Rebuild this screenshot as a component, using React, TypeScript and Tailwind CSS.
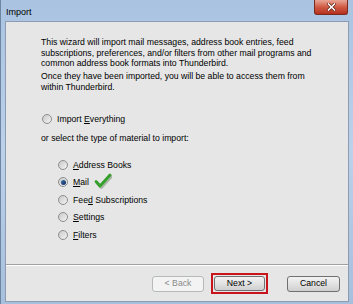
import React from "react";

const font = { fontFamily: '"Liberation Sans", Arial, sans-serif' };

const Radio = ({ checked = false }: { checked?: boolean }): React.ReactElement => {
  return (
    <div className="w-[10px] h-[10px] rounded-full border border-[#8e8e8e] bg-gradient-to-br from-[#c9c9c9] to-[#f4f4f4] flex items-center justify-center shrink-0">
      {checked ? (
        <div className="w-[5px] h-[5px] rounded-full bg-gradient-to-br from-[#3d6fae] to-[#0d2c5c]" />
      ) : null}
    </div>
  );
};

const Option = ({
  label,
  underline,
  checked,
  children,
}: {
  label: string;
  underline: number;
  checked?: boolean;
  children?: React.ReactNode;
}): React.ReactElement => {
  return (
    <div className="h-[17.5px] flex items-center pl-[17px]">
      <Radio checked={checked} />
      <span className="ml-[5px] text-[8.7px] leading-[10.5px] text-black whitespace-nowrap">
        {label.slice(0, underline)}
        <span className="underline">{label[underline]}</span>
        {label.slice(underline + 1)}
      </span>
      {children}
    </div>
  );
};

const App = (): React.ReactElement => {
  return (
    <div
      className="w-[353px] h-[304px] flex flex-col bg-gradient-to-b from-[#a9c3e1] via-[#bcd1ea] to-[#a6bfdc] border-l border-[#6f86a3] px-[4px] pb-[2px] overflow-hidden"
      style={font}
    >
      {/* title bar */}
      <div className="h-[21px] flex items-start justify-between shrink-0">
        <span className="text-[9px] text-black pt-[6px] pl-[1px]">Import</span>
        <div className="w-[34px] h-[15px] mr-[1px] rounded-b-[3px] border border-[#7a2a1f] border-t-0 bg-gradient-to-b from-[#e8a595] via-[#cf5a43] to-[#b5301e] flex items-center justify-center">
          <svg width="9" height="8" viewBox="0 0 9 8">
            <path d="M1.5 1 L7.5 7 M7.5 1 L1.5 7" stroke="#5a1a10" strokeWidth="3" strokeLinecap="square" />
            <path d="M1.5 1 L7.5 7 M7.5 1 L1.5 7" stroke="#ffffff" strokeWidth="1.6" strokeLinecap="square" />
          </svg>
        </div>
      </div>

      {/* client area */}
      <div className="flex-1 flex flex-col bg-[#e6e6e6] border border-[#8b9cb3]">
        <div className="flex-1 pl-[35px] pt-[15px] text-[8.7px] leading-[10.5px] text-black">
          <p className="whitespace-nowrap">
            This wizard will import mail messages, address book entries, feed
            <br />
            subscriptions, preferences, and/or filters from other mail programs and
            <br />
            common address book formats into Thunderbird.
          </p>
          <p className="whitespace-nowrap mt-[2.5px]">
            Once they have been imported, you will be able to access them from
            <br />
            within Thunderbird.
          </p>

          <div className="h-[12px] mt-[21px] flex items-center pl-[1px]">
            <Radio />
            <span className="ml-[5px]">
              Import <span className="underline">E</span>verything
            </span>
          </div>

          <p className="h-[12px] mt-[7px] flex items-center">
            or select the type of material to import:
          </p>

          <div className="mt-[12px]">
            <Option label="Address Books" underline={0} />
            <Option label="Mail" underline={0} checked>
              <svg width="18" height="17" viewBox="0 0 18 17" className="ml-[5px] -mt-[4px]">
                <path d="M2.5 10 L6.5 14.5 L16.5 3.5" fill="none" stroke="#1d4a12" strokeOpacity="0.3" strokeWidth="3.2" strokeLinecap="round" strokeLinejoin="round" transform="translate(0.8 0.9)" />
                <path d="M2 9.5 L6 14 L16 3" fill="none" stroke="#34a02a" strokeWidth="2.8" strokeLinecap="round" strokeLinejoin="round" />
              </svg>
            </Option>
            <Option label="Feed Subscriptions" underline={3} />
            <Option label="Settings" underline={0} />
            <Option label="Filters" underline={0} />
          </div>
        </div>

        <div className="h-px bg-[#a0a0a0] border-b border-white box-content" />

        <div className="h-[35px] flex items-center justify-end pr-[8px] text-[8.7px]">
          <button className="w-[52px] h-[16px] rounded-[3px] border border-[#b5b9bc] bg-[#f3f3f3] text-[#8a8a8a]">
            &lt; Back
          </button>
          <div className="ml-[7px] border-2 border-[#c8141c] p-px">
            <button className="w-[51px] h-[15px] rounded-[3px] border border-[#707070] bg-gradient-to-b from-[#f2f2f2] via-[#e2e2e2] to-[#cfcfcf] text-black block">
              Next &gt;
            </button>
          </div>
          <button className="ml-[19px] w-[53px] h-[16px] rounded-[3px] border border-[#707070] bg-gradient-to-b from-[#f2f2f2] via-[#e2e2e2] to-[#cfcfcf] text-black">
            Cancel
          </button>
        </div>
      </div>
    </div>
  );
};

export default App;
